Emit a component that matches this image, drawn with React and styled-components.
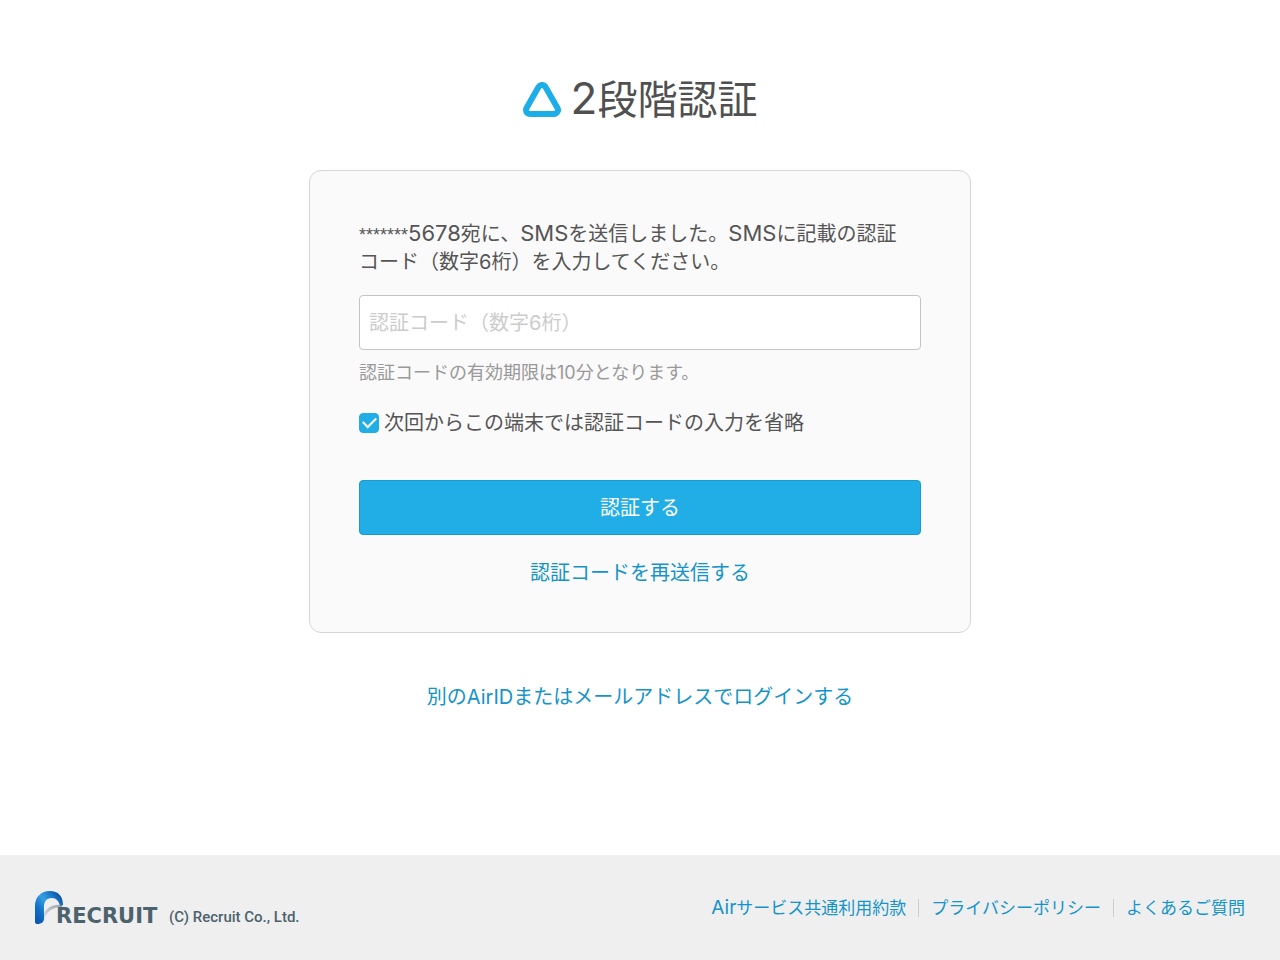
import { useState } from "react";
import styled, { createGlobalStyle } from "styled-components";

const AirMark = () => (
  <svg width="38" height="36" viewBox="0 0 38 36" aria-hidden="true">
    <path d="M19 7 L31 28 H7 Z" fill="#1eaee7" stroke="#1eaee7" strokeWidth="14" strokeLinejoin="round" />
    <path d="M19 7 L31 28 H7 Z" fill="#fff" stroke="#fff" strokeWidth="2" strokeLinejoin="round" />
  </svg>
);

const RecruitLogo = () => (
  <svg width="126" height="34" viewBox="0 0 126 34" overflow="visible" role="img" aria-label="RECRUIT">
    <defs>
      <linearGradient id="arch" x1="0" y1="1" x2="0.9" y2="0.1">
        <stop offset="0" stopColor="#0a4fae" />
        <stop offset="0.3" stopColor="#0f6cc6" />
        <stop offset="0.6" stopColor="#369fe2" />
        <stop offset="0.8" stopColor="#1b7acb" />
        <stop offset="1" stopColor="#0b4c9c" />
      </linearGradient>
      <linearGradient id="ribbon" x1="0" y1="1" x2="1" y2="0">
        <stop offset="0" stopColor="#d9dcde" />
        <stop offset="1" stopColor="#9aa4aa" />
      </linearGradient>
    </defs>
    <path d="M9 23 C11 17 18 13 27 14 L27 16 C18 16 12 20 9 28 Z" fill="url(#ribbon)" />
    <path
      d="M0 31 V15 C0 6 6 0 15 0 C23 0 28 5 28 14 L25 15 C24 10 21 7 17 7 C11 7 9 11 9 16 V28 C9 31 6 33 2 33 Q0 33 0 31 Z"
      fill="url(#arch)"
    />
    <text x="21" y="32" fontFamily="'DejaVu Sans', sans-serif" fontWeight="700" fontSize="21" fill="#4c626d">
      RECRUIT
    </text>
  </svg>
);

const App = () => {
  const [code, setCode] = useState("");
  const [skip, setSkip] = useState(true);

  return (
    <Page>
      <GlobalStyle />
      <Main>
        <Title>
          <AirMark />
          <span>
            <Latin $size={44}>2</Latin>段階認証
          </span>
        </Title>

        <Card onSubmit={(e) => e.preventDefault()}>
          <Lead htmlFor="code">
            <Masked>*******</Masked>
            <Latin $size={22}>5678</Latin>宛に、<Latin $size={22}>SMS</Latin>を送信しました。
            <Latin $size={22}>SMS</Latin>に記載の認証コード（数字6桁）を入力してください。
          </Lead>
          <CodeInput
            id="code"
            placeholder="認証コード（数字6桁）"
            value={code}
            onChange={(e) => setCode(e.target.value)}
          />
          <Note>認証コードの有効期限は10分となります。</Note>
          <CheckLabel>
            <Checkbox type="checkbox" checked={skip} onChange={(e) => setSkip(e.target.checked)} />
            次回からこの端末では認証コードの入力を省略
          </CheckLabel>
          <Submit type="submit">認証する</Submit>
          <TextLink href="#resend">認証コードを再送信する</TextLink>
        </Card>

        <TextLink href="#login">別のAirIDまたはメールアドレスでログインする</TextLink>
      </Main>

      <Footer>
        <Company>
          <RecruitLogo />
          <Copyright>(C) Recruit Co., Ltd.</Copyright>
        </Company>
        <FooterNav>
          <FooterLink href="#terms">
            <Latin $size={19}>Air</Latin>サービス共通利用約款
          </FooterLink>
          <FooterLink href="#privacy">プライバシーポリシー</FooterLink>
          <FooterLink href="#faq">よくあるご質問</FooterLink>
        </FooterNav>
      </Footer>
    </Page>
  );
};

export default App;

const GlobalStyle = createGlobalStyle`
  *, *::before, *::after {
    box-sizing: border-box;
  }

  body {
    margin: 0;
    background: #fff;
    color: #555;
    font-family: Inter, "Noto Sans CJK JP", sans-serif;
    font-size: 20px;
    line-height: 28px;
  }
`;

const Page = styled.div`
  display: flex;
  flex-direction: column;
  min-height: 100vh;
`;

const Main = styled.main`
  flex: 1;
  display: flex;
  flex-direction: column;
  align-items: center;
  padding: 76px 24px 48px;
`;

const Title = styled.h1`
  display: flex;
  align-items: center;
  gap: 10px;
  margin: 0 0 46px;
  color: #505050;
  font-size: 40px;
  font-weight: 400;
  line-height: 48px;
`;

//latin letters run a little larger than the kanji beside them
const Latin = styled.span`
  font-size: ${({ $size }) => $size}px;
  line-height: 1;
`;

const Card = styled.form`
  display: flex;
  flex-direction: column;
  width: 100%;
  max-width: 662px;
  margin-bottom: 50px;
  padding: 49px 49px 45px;
  border: 1px solid #d6d6d6;
  border-radius: 12px;
  background: #fafafa;
`;

const Lead = styled.label`
  margin-bottom: 19px;
  padding-right: 16px;
`;

const Masked = styled.span`
  font-family: "Liberation Sans", sans-serif;
  font-size: 18px;
  line-height: 1;
`;

const CodeInput = styled.input`
  width: 100%;
  height: 55px;
  padding: 0 9px;
  border: 1px solid #c4c4c4;
  border-radius: 4px;
  background: #fff;
  color: inherit;
  font: inherit;

  &::placeholder {
    color: #ccc;
    opacity: 1;
  }
`;

const Note = styled.p`
  margin: 9px 0 22px;
  color: #999;
  font-size: 18px;
`;

const CheckLabel = styled.label`
  display: flex;
  align-items: center;
  gap: 5px;
  margin-bottom: 43px;
`;

const Checkbox = styled.input`
  appearance: none;
  flex: none;
  display: grid;
  place-items: center;
  width: 20px;
  height: 20px;
  margin: 0;
  border: 1px solid #21aee6;
  border-radius: 4px;
  background: #fff;

  &:checked {
    background: #21aee6;
  }

  &:checked::before {
    content: "";
    width: 13px;
    height: 8px;
    border: solid #fff;
    border-width: 0 0 2px 2px;
    transform: translateY(-2px) rotate(-45deg);
  }
`;

const Submit = styled.button`
  height: 55px;
  margin-bottom: 24px;
  border: 1px solid #1c9acb;
  border-radius: 4px;
  background: #21aee6;
  color: #fff;
  font: inherit;
  cursor: pointer;
`;

const TextLink = styled.a`
  align-self: center;
  color: #1594c9;
  text-decoration: none;
`;

const Footer = styled.footer`
  display: flex;
  align-items: center;
  justify-content: space-between;
  min-height: 105px;
  padding: 0 35px;
  background: #efefef;
`;

const Company = styled.div`
  display: flex;
  align-items: center;
  gap: 8px;
`;

const Copyright = styled.small`
  padding-top: 18px;
  color: #4c626d;
  font-family: Roboto, sans-serif;
  font-size: 15px;
  font-weight: 500;
  line-height: 16px;
`;

const FooterNav = styled.nav`
  display: flex;
  align-items: center;
`;

const FooterLink = styled.a`
  color: #1594c9;
  font-size: 17px;
  line-height: 18px;
  text-decoration: none;

  & + & {
    margin-left: 12px;
    padding-left: 12px;
    border-left: 1px solid #ccc;
  }
`;
